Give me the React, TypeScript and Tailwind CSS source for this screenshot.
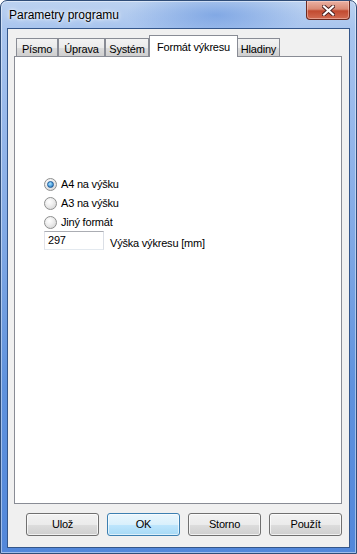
import React from 'react';

const font = { fontFamily: '"Liberation Sans", Arial, sans-serif' };

function Tab({ label, width, selected, className = '' }: { label: string; width: string; selected?: boolean; className?: string }) {
  if (selected) {
    return (
      <div
        className={`relative z-10 -mb-[1px] flex h-[22px] items-start justify-center border border-b-0 border-[#898c95] bg-white pt-[3px] ${width} ${className}`}
      >
        {label}
      </div>
    );
  }
  return (
    <div
      className={`flex h-[18px] items-start justify-center border border-b-0 border-[#898c95] bg-[linear-gradient(180deg,#f3f3f3_0%,#ebebeb_50%,#dddddd_51%,#cfcfcf_100%)] pt-[2px] ${width} ${className}`}
    >
      {label}
    </div>
  );
}

function Radio({ label, checked }: { label: string; checked?: boolean }) {
  return (
    <div className="flex h-[19px] items-center">
      <div className="flex h-[13px] w-[13px] items-center justify-center rounded-full border border-[#8e8f8f] bg-[radial-gradient(circle_at_40%_35%,#ffffff_0%,#f1f1f1_35%,#cfcfcf_100%)]">
        {checked && (
          <div className="h-[7px] w-[7px] rounded-full border border-[#1d5a9a] bg-[radial-gradient(circle_at_40%_35%,#b4e3fb_0%,#5fb0e8_45%,#1f5e9e_100%)]" />
        )}
      </div>
      <span className="ml-[4px]">{label}</span>
    </div>
  );
}

function Button({ label, primary }: { label: string; primary?: boolean }) {
  return (
    <div
      className={
        primary
          ? 'flex h-[23px] w-[73px] items-center justify-center rounded-[3px] border border-[#3c7fb1] bg-[linear-gradient(180deg,#eaf6fd_0%,#d9f0fc_50%,#bee6fd_51%,#a7d9f5_100%)] shadow-[inset_0_0_0_1px_rgba(255,255,255,0.6)]'
          : 'flex h-[23px] w-[73px] items-center justify-center rounded-[3px] border border-[#707070] bg-[linear-gradient(180deg,#f2f2f2_0%,#ebebeb_50%,#dddddd_51%,#cfcfcf_100%)] shadow-[inset_0_0_0_1px_rgba(255,255,255,0.7)]'
      }
    >
      {label}
    </div>
  );
}

export default function App() {
  return (
    <div className="h-[554px] w-[357px] bg-white text-[11px] tracking-[-0.2px] text-black" style={font}>
      <div className="relative flex h-[554px] w-[357px] flex-col overflow-hidden rounded-t-[7px] border border-[#2f4d78] bg-[radial-gradient(ellipse_90px_26px_at_215px_14px,rgba(90,140,220,0.55),transparent),linear-gradient(180deg,#bcd2f0_0%,#a9c5ee_5%,#94b6ea_25%,#7ea7e4_45%,#5f92dd_70%,#5287da_100%)] shadow-[inset_0_0_0_1px_rgba(255,255,255,0.45)]">
        {/* Title bar */}
        <div className="flex h-[27px] items-center pl-[8px] text-[12px] tracking-normal [text-shadow:0_0_6px_#ffffff,0_0_3px_#ffffff]">
          Parametry programu
        </div>

        {/* Close button */}
        <div className="absolute right-[6px] top-0 flex h-[19px] w-[44px] items-center justify-center rounded-b-[4px] border border-t-0 border-[#6b2a20] bg-[linear-gradient(180deg,#eab1a3_0%,#d98a75_45%,#c24a30_55%,#d26b52_100%)] shadow-[inset_0_0_0_1px_rgba(255,220,210,0.45)]">
          <svg width="13" height="11" viewBox="0 0 13 11">
            <path d="M2 1.5 L11 9.5 M11 1.5 L2 9.5" stroke="#4a2020" strokeWidth="4" strokeLinecap="square" />
            <path d="M2 1.5 L11 9.5 M11 1.5 L2 9.5" stroke="#ffffff" strokeWidth="2.2" strokeLinecap="square" />
          </svg>
        </div>

        {/* Client area */}
        <div className="mx-[6px] mb-[5px] flex h-[520px] flex-col border border-[#34568a] bg-[#f0f0f0]">
          <div className="h-[6px]" />

          {/* Tabs */}
          <div className="flex h-[21px] items-end pl-[8px]">
            <Tab label="Písmo" width="w-[42px]" />
            <Tab label="Úprava" width="w-[47px]" />
            <Tab label="Systém" width="w-[44px]" />
            <Tab label="Formát výkresu" width="w-[89px]" selected />
            <Tab label="Hladiny" width="w-[43px]" className="-ml-[1px]" />
          </div>

          {/* Tab panel */}
          <div className="ml-[6px] h-[448px] w-[328px] border border-[#898c95] bg-white">
            <div className="pl-[29px] pt-[118px]">
              <Radio label="A4 na výšku" checked />
              <Radio label="A3 na výšku" />
              <Radio label="Jiný formát" />
              <div className="mt-[-1px] flex items-end">
                <div className="flex h-[19px] w-[60px] items-center border border-[#abadb3] border-b-[#e3e9ef] border-l-[#e2e3ea] border-r-[#dbdfe6] bg-white pl-[3px]">
                  297
                </div>
                <span className="mb-[-1px] ml-[6px]">Výška výkresu [mm]</span>
              </div>
            </div>
          </div>

          {/* Buttons */}
          <div className="mt-[9px] flex justify-end gap-[8px] pr-[7px]">
            <Button label="Ulož" />
            <Button label="OK" primary />
            <Button label="Storno" />
            <Button label="Použít" />
          </div>
        </div>
      </div>
    </div>
  );
}
